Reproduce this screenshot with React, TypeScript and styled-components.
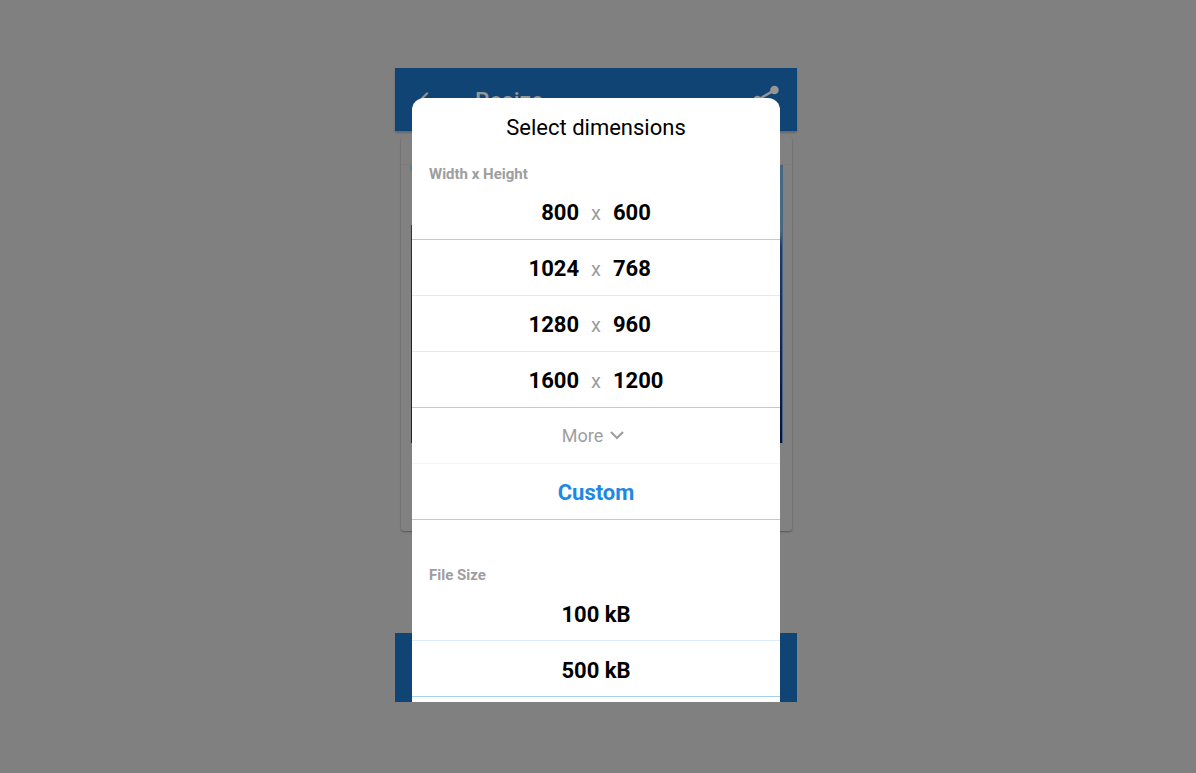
import React from "react";
import styled, { createGlobalStyle } from "styled-components";
import { MdArrowBack, MdShare } from "react-icons/md";

const GlobalStyle = createGlobalStyle`
  * { box-sizing: border-box; }
  body {
    margin: 0;
    background: #808080;
    font-family: Roboto, "Liberation Sans", sans-serif;
  }
  button {
    border: 0;
    padding: 0;
    background: none;
    font: inherit;
    color: inherit;
    cursor: pointer;
  }
`;

const Stage = styled.main`
  display: flex;
  justify-content: center;
  align-items: flex-start;
  min-height: 100vh;
  padding: 68px 4px 68px 0;
`;

const Phone = styled.div`
  display: grid;
  width: 100%;
  max-width: 402px;
`;

const Screen = styled.div`
  grid-area: 1 / 1;
  display: flex;
  flex-direction: column;
  min-width: 0;
`;

const AppBar = styled.header`
  display: flex;
  align-items: center;
  height: 63px;
  padding: 0 14px 0 20px;
  background: #104474;
  color: #969696;
  box-shadow: 0 2px 2px rgba(0, 0, 0, 0.2);
`;

const IconButton = styled.button`
  display: flex;
`;

const ScreenTitle = styled.h1`
  flex: 1;
  margin: 0 0 0 36px;
  font-size: 23px;
  font-weight: 500;
  line-height: 28px;
  padding-top: 4px;
`;

const Content = styled.div`
  flex: 1;
  display: flex;
  padding: 6px 5px 102px 6px;
`;

const Card = styled.section`
  flex: 1;
  display: flex;
  flex-direction: column;
  padding-bottom: 88px;
  border-radius: 3px;
  background: #818181;
  box-shadow: 0 1px 2px rgba(0, 0, 0, 0.35);
`;

const CardHeader = styled.div`
  height: 28px;
  border-bottom: 1px solid #7c7c7c;
`;

const Photo = styled.svg`
  flex: 1;
  width: 100%;
  min-height: 0;
  padding: 0 9px;
`;

const BottomBar = styled.footer`
  height: 69px;
  background: #104474;
`;

const Sheet = styled.div`
  grid-area: 1 / 1;
  z-index: 1;
  margin: 30px 17px 0;
  padding-bottom: 5px;
  border-radius: 12px 12px 0 0;
  background: #fff;
  color: #000;
`;

const SheetTitle = styled.h2`
  margin: 0 0 6px;
  font-size: 22px;
  font-weight: 400;
  line-height: 60px;
  text-align: center;
`;

const Group = styled.section`
  & + & {
    margin-top: 45px;
  }
`;

const GroupLabel = styled.h3`
  margin: 0;
  padding: 0 17px;
  color: #9e9e9e;
  font-size: 15px;
  font-weight: 700;
  line-height: 20px;
`;

const lineColors = { strong: "#a8d0f5", soft: "#d9ebfc", faint: "#f0f8fe" };
type Line = keyof typeof lineColors;

const Option = styled.button<{ $line: Line }>`
  display: flex;
  justify-content: center;
  align-items: center;
  width: 100%;
  height: 56px;
  padding-top: 4px;
  border-bottom: 1px solid ${(p) => lineColors[p.$line]};
  font-size: 22px;
  font-weight: 700;
  line-height: 28px;
`;

const SizeOption = styled(Option)`
  display: grid;
  grid-template-columns: 1fr auto 1fr;
  column-gap: 12px;
  padding-top: 3px;
`;

const WidthValue = styled.span`
  text-align: right;
`;

const HeightValue = styled.span`
  text-align: left;
`;

const Times = styled.span`
  color: #9e9e9e;
  font-size: 20px;
  font-weight: 400;
`;

const MoreOption = styled(Option)`
  gap: 7px;
  padding: 0 6px 0 0;
  color: #9e9e9e;
  font-size: 18px;
  font-weight: 400;
`;

const CustomOption = styled(Option)`
  padding-top: 3px;
  color: #1e88e5;
`;

const dimensions: { width: number; height: number; line: Line }[] = [
  { width: 800, height: 600, line: "strong" },
  { width: 1024, height: 768, line: "soft" },
  { width: 1280, height: 960, line: "soft" },
  { width: 1600, height: 1200, line: "strong" },
];

const fileSizes: { label: string; line: Line }[] = [
  { label: "100 kB", line: "soft" },
  { label: "500 kB", line: "strong" },
];

export default function App() {
  return (
    <>
      <GlobalStyle />
      <Stage>
        <Phone>
          <Screen>
            <AppBar>
              <IconButton aria-label="Back">
                <MdArrowBack size={24} />
              </IconButton>
              <ScreenTitle>Resize</ScreenTitle>
              <IconButton aria-label="Share">
                <MdShare size={34} />
              </IconButton>
            </AppBar>
            <Content>
              <Card>
                <CardHeader />
                <Photo viewBox="0 0 373 278" preserveAspectRatio="none" aria-hidden="true">
                  <defs>
                    <linearGradient id="sky" x1="0" y1="0" x2="0" y2="1">
                      <stop offset="0" stopColor="#416a88" />
                      <stop offset="0.24" stopColor="#456d80" />
                      <stop offset="0.29" stopColor="#1f3d6b" />
                      <stop offset="1" stopColor="#04143f" />
                    </linearGradient>
                    <linearGradient id="shore" x1="0" y1="0" x2="0" y2="1">
                      <stop offset="0" stopColor="#2c3838" />
                      <stop offset="0.4" stopColor="#152335" />
                      <stop offset="1" stopColor="#25231f" />
                    </linearGradient>
                  </defs>
                  <rect x="0" y="0" width="2" height="6" fill="#5f7f90" />
                  <rect x="1" y="60" width="180" height="218" fill="url(#shore)" />
                  <rect x="180" y="0" width="192" height="278" fill="url(#sky)" />
                  <rect x="372" y="0" width="1" height="278" fill="#4a6180" />
                </Photo>
              </Card>
            </Content>
            <BottomBar />
          </Screen>

          <Sheet role="dialog" aria-labelledby="sheet-title">
            <SheetTitle id="sheet-title">Select dimensions</SheetTitle>
            <Group>
              <GroupLabel>Width x Height</GroupLabel>
              {dimensions.map((d) => (
                <SizeOption key={d.width} $line={d.line}>
                  <WidthValue>{d.width}</WidthValue>
                  <Times>x</Times>
                  <HeightValue>{d.height}</HeightValue>
                </SizeOption>
              ))}
              <MoreOption $line="faint">
                More
                <svg width="14" height="9" viewBox="0 0 14 9" fill="none" aria-hidden="true">
                  <path d="M1 1l6 6 6-6" stroke="currentColor" strokeWidth="2.2" />
                </svg>
              </MoreOption>
              <CustomOption $line="strong">Custom</CustomOption>
            </Group>
            <Group>
              <GroupLabel>File Size</GroupLabel>
              {fileSizes.map((f) => (
                <Option key={f.label} $line={f.line}>
                  {f.label}
                </Option>
              ))}
            </Group>
          </Sheet>
        </Phone>
      </Stage>
    </>
  );
}
